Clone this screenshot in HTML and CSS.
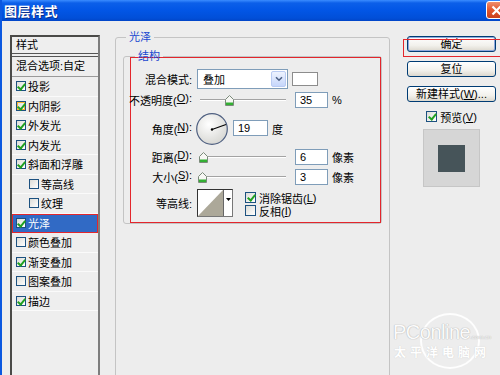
FILE: index.html
```html
<!DOCTYPE html>
<html lang="zh-CN">
<head>
    <meta charset="UTF-8">
    <title>图层样式</title>
    <link rel="stylesheet" href="styles.css">
</head>
<body>
    <div class="window">
        <div class="titlebar">
            <span class="title">图层样式</span>
            <span class="close">
                <svg width="11" height="11" viewBox="0 0 11 11"><path d="M1.5 1.5 L9.5 9.5 M9.5 1.5 L1.5 9.5" stroke="#fff" stroke-width="2.2"/></svg>
            </span>
        </div>

        <div class="body">
            <!-- style list -->
            <div class="styles-list">
                <div class="list-head">样式</div>
                <div class="list-blend">混合选项:自定</div>
                <div class="list-item"><span class="cb on"></span>投影</div>
                <div class="list-item"><span class="cb on hot"></span>内阴影</div>
                <div class="list-item"><span class="cb on"></span>外发光</div>
                <div class="list-item"><span class="cb on"></span>内发光</div>
                <div class="list-item"><span class="cb on"></span>斜面和浮雕</div>
                <div class="list-item sub"><span class="cb"></span>等高线</div>
                <div class="list-item sub"><span class="cb"></span>纹理</div>
                <div class="list-item selected"><span class="cb on"></span>光泽</div>
                <div class="list-item"><span class="cb"></span>颜色叠加</div>
                <div class="list-item"><span class="cb on"></span>渐变叠加</div>
                <div class="list-item"><span class="cb"></span>图案叠加</div>
                <div class="list-item"><span class="cb on"></span>描边</div>
            </div>

            <!-- settings -->
            <fieldset class="group outer">
                <legend>光泽</legend>
                <fieldset class="group inner">
                    <legend>结构</legend>
                    <div class="marked">
                        <div class="row row-blend">
                            <span class="lbl">混合模式:</span>
                            <div class="select">
                                <span class="select-text">叠加</span>
                                <span class="select-btn">
                                    <svg width="8" height="6" viewBox="0 0 8 6"><path d="M1 1.2 L4 4.2 L7 1.2" fill="none" stroke="#4d6185" stroke-width="1.6"/></svg>
                                </span>
                            </div>
                            <span class="swatch"></span>
                        </div>

                        <div class="row row-opacity">
                            <span class="lbl">不透明度(<u>O</u>):</span>
                            <div class="slider">
                                <div class="track"></div>
                                <span class="thumb" style="left: 30%"><svg width="9" height="11" viewBox="0 0 9 11"><path d="M0.5 4.5 L4.5 0.5 L8.5 4.5 V10.5 H0.5 Z" fill="#f7f7f4" stroke="#7a8a7a"/><rect x="1" y="7.5" width="7" height="2.5" fill="#33b033"/></svg></span>
                            </div>
                            <span class="field">35</span>
                            <span class="unit">%</span>
                        </div>

                        <div class="row row-angle">
                            <span class="lbl">角度(<u>N</u>):</span>
                            <svg class="dial" width="32" height="32" viewBox="0 0 32 32">
                                <defs>
                                    <radialGradient id="dialFill" cx="40%" cy="35%" r="70%">
                                        <stop offset="0" stop-color="#ffffff"/>
                                        <stop offset="1" stop-color="#d6d6d2"/>
                                    </radialGradient>
                                </defs>
                                <circle cx="16" cy="16" r="15.3" fill="url(#dialFill)" stroke="#4e5f80" stroke-width="1.2"/>
                                <line x1="16" y1="16.5" x2="30" y2="11.4" stroke="#000" stroke-width="1.1"/>
                                <circle cx="16" cy="16.5" r="1.2" fill="#000"/>
                            </svg>
                            <span class="field wide">19</span>
                            <span class="unit">度</span>
                        </div>

                        <div class="row row-slider">
                            <span class="lbl">距离(<u>D</u>):</span>
                            <div class="slider">
                                <div class="track"></div>
                                <span class="thumb" style="left: 2%"><svg width="9" height="11" viewBox="0 0 9 11"><path d="M0.5 4.5 L4.5 0.5 L8.5 4.5 V10.5 H0.5 Z" fill="#f7f7f4" stroke="#7a8a7a"/><rect x="1" y="7.5" width="7" height="2.5" fill="#33b033"/></svg></span>
                            </div>
                            <span class="field">6</span>
                            <span class="unit">像素</span>
                        </div>

                        <div class="row row-slider">
                            <span class="lbl">大小(<u>S</u>):</span>
                            <div class="slider">
                                <div class="track"></div>
                                <span class="thumb" style="left: 1%"><svg width="9" height="11" viewBox="0 0 9 11"><path d="M0.5 4.5 L4.5 0.5 L8.5 4.5 V10.5 H0.5 Z" fill="#f7f7f4" stroke="#7a8a7a"/><rect x="1" y="7.5" width="7" height="2.5" fill="#33b033"/></svg></span>
                            </div>
                            <span class="field">3</span>
                            <span class="unit">像素</span>
                        </div>

                        <div class="row row-contour">
                            <span class="lbl">等高线:</span>
                            <div class="contour">
                                <svg width="25" height="26" viewBox="0 0 25 26"><rect width="25" height="26" fill="#fff"/><polygon points="0,26 25,0 25,26" fill="#aca899"/></svg>
                                <span class="contour-btn"><svg width="5" height="3" viewBox="0 0 5 3"><path d="M0 0 H5 L2.5 3 Z" fill="#000"/></svg></span>
                            </div>
                            <div class="checks">
                                <label class="check"><span class="cb big on"></span>消除锯齿(<u>L</u>)</label>
                                <label class="check"><span class="cb big"></span>反相(<u>I</u>)</label>
                            </div>
                        </div>
                    </div>
                </fieldset>
            </fieldset>

            <!-- buttons -->
            <div class="side">
                <span class="btn default">确定</span>
                <span class="btn">复位</span>
                <span class="btn">新建样式(<u>W</u>)...</span>
                <label class="check preview-check"><span class="cb big on"></span>预览(<u>V</u>)</label>
                <div class="preview"><span class="preview-swatch"></span></div>
                <span class="mark-ok"></span>
            </div>
        </div>

        <div class="watermark">
            <span class="wm-ring"></span>
            <span class="wm-logo">PConline<small>.com.cn</small></span>
            <span class="wm-sub">太平洋电脑网</span>
        </div>
    </div>
</body>
</html>
```

FILE: styles.css
```css
* {
    box-sizing: border-box;
}
body {
    margin: 0;
    width: 500px;
    height: 375px;
    overflow: hidden;
    font-family: "Liberation Sans", "Noto Sans CJK SC", sans-serif;
    font-size: 11px;
    color: #000;
    background: #ededed;
}
u {
    text-decoration: underline;
}
.window {
    position: relative;
    height: 375px;
    overflow: hidden;
    border-left: 2px solid #0b58e0;
    background: #ededed;
}
.titlebar {
    height: 21px;
    display: flex;
    align-items: center;
    justify-content: space-between;
    padding-left: 2px;
    background: linear-gradient(#3a8cff 0, #0c5fe9 3px, #0256e6 10px, #014fd8 18px, #0145c8 21px);
}
.title {
    color: #fff;
    font-weight: bold;
    font-size: 13px;
    letter-spacing: 0.5px;
    text-shadow: 1px 1px 0 #0a2e8a;
}
.close {
    width: 21px;
    height: 18px;
    margin-right: -7px;
    margin-top: -1px;
    display: flex;
    align-items: center;
    justify-content: center;
    border: 1px solid #fff;
    border-radius: 3px;
    background: linear-gradient(#f08e6c, #e2562e 50%, #c8401c);
}
.body {
    display: flex;
    align-items: flex-start;
    padding-top: 14px;
}

/* style list */
.styles-list {
    margin-left: 8px;
    width: 90px;
    height: 345px;
    flex: none;
    border: 2px solid #4a4a48;
    border-right-color: #7d7d7d;
    border-bottom: none;
    background: #eeeeee;
}
.list-head {
    height: 20px;
    line-height: 16px;
    padding-left: 4px;
    border-bottom: 4px double #555;
}
.list-blend {
    height: 20px;
    line-height: 19px;
    padding-left: 4px;
    border-bottom: 1px solid #9a9a9a;
}
.list-item {
    height: 19.5px;
    display: flex;
    align-items: center;
    padding-left: 4px;
    border-bottom: 1px solid #fafafa;
}
.list-item.sub {
    padding-left: 17px;
}
.list-item.selected {
    background: #316ac5;
    color: #fff;
    outline: 1px solid #e3262c;
    outline-offset: -1px;
}
.cb {
    position: relative;
    width: 10px;
    height: 10px;
    margin-right: 2px;
    flex: none;
    border: 1px solid #1c5180;
    background: linear-gradient(135deg, #dcdcd7, #fff);
}
.cb.big {
    width: 11px;
    height: 11px;
    margin-right: 3px;
}
.cb.hot {
    box-shadow: inset 0 0 0 1px #f8b636;
}
.cb.on::after {
    content: "";
    position: absolute;
    left: 2px;
    top: 0px;
    width: 3px;
    height: 6px;
    border-right: 2px solid #21a121;
    border-bottom: 2px solid #21a121;
    transform: rotate(40deg);
}
.cb.big.on::after {
    left: 3px;
    top: 0px;
}

/* group boxes */
.group {
    margin: 0;
    padding: 0;
    min-width: 0;
    border: 1px solid #c4c4c4;
    border-radius: 3px;
}
.group legend {
    margin-left: 10px;
    padding: 0 3px;
    line-height: 14px;
    color: #1a48d0;
}
.outer {
    margin: -5px 0 0 15px;
    width: 275px;
    height: 360px;
    flex: none;
}
.inner {
    margin: 5px 0 0 7px;
    width: 259px;
}
.inner legend {
    margin-left: 11px;
}
.marked {
    margin: -6px 0 0 6px;
    padding: 11px 0 5px;
    border: 1px solid #e3262c;
}
.row {
    display: flex;
    align-items: center;
}
.lbl {
    width: 66px;
    flex: none;
    display: flex;
    justify-content: flex-end;
    padding-right: 5px;
    white-space: nowrap;
}
.row-blend {
    height: 20px;
}
.row-opacity {
    height: 16px;
    margin-top: 3px;
}
.row-angle {
    height: 32px;
    margin-top: 5px;
}
.row-slider {
    height: 16px;
    margin-top: 4px;
}
.row-contour {
    height: 28px;
    margin-top: 4px;
    align-items: flex-start;
}
.row-contour .lbl {
    height: 28px;
    align-items: center;
}
.select {
    width: 91px;
    height: 20px;
    display: flex;
    align-items: center;
    justify-content: space-between;
    border: 1px solid #7f9db9;
    background: #fff;
    padding: 1px;
}
.select-text {
    padding-left: 4px;
}
.select-btn {
    width: 15px;
    height: 16px;
    display: flex;
    align-items: center;
    justify-content: center;
    border: 1px solid #b9cbf3;
    border-radius: 2px;
    background: linear-gradient(#eef3fe, #c6d6fb);
}
.swatch {
    width: 26px;
    height: 14px;
    margin-left: 4px;
    border: 1px solid #8c8c8c;
    background: #fff;
}
.slider {
    position: relative;
    width: 93px;
    height: 16px;
    flex: none;
}
.track {
    margin: 7px 4px 0 3px;
    height: 2px;
    border-top: 1px solid #a3a3a3;
    border-bottom: 1px solid #fff;
}
.thumb {
    position: absolute;
    top: 3px;
    width: 9px;
    height: 11px;
    display: block;
}
.thumb svg {
    display: block;
}
.field {
    width: 33px;
    height: 16px;
    margin-left: 5px;
    padding-left: 4px;
    line-height: 14px;
    flex: none;
    border: 1px solid #7f9db9;
    background: #fff;
}
.field.wide {
    width: 35px;
}
.unit {
    margin-left: 4px;
}
.dial {
    display: block;
    margin-left: -1px;
}
.row-angle .field {
    margin-top: -2px;
}
.contour {
    display: flex;
    width: 36px;
    height: 28px;
    border: 1px solid #333;
    border-right-color: #777;
    border-bottom-color: #777;
    background: #fff;
}
.contour svg {
    display: block;
}
.contour-btn {
    width: 9px;
    display: flex;
    justify-content: center;
    padding-top: 8px;
    border-left: 1px solid #666;
}
.checks {
    margin-left: 12px;
    display: flex;
    flex-direction: column;
    padding-top: 2px;
}
.check {
    display: flex;
    align-items: center;
    height: 13px;
}

/* right side */
.side {
    position: relative;
    margin: 1px 0 0 17px;
    width: 89px;
    flex: none;
    display: flex;
    flex-direction: column;
    align-items: center;
}
.btn {
    width: 89px;
    height: 16px;
    margin-bottom: 9px;
    line-height: 14px;
    text-align: center;
    border: 1px solid #003c74;
    border-radius: 3px;
    background: linear-gradient(#ffffff, #f2f1ec 60%, #dcd8ce);
}
.btn.default {
    box-shadow: inset 0 0 0 1px #8fa9de;
}
.preview-check {
    margin-top: -1px;
}
.preview {
    margin-top: 6px;
    width: 57px;
    height: 58px;
    display: flex;
    align-items: center;
    justify-content: center;
    border: 1px solid #c6c6c6;
    background: #d6d6d6;
}
.preview-swatch {
    width: 27px;
    height: 27px;
    background: #465459;
}
.mark-ok {
    position: absolute;
    left: -4px;
    top: 3px;
    width: 100px;
    height: 18px;
    border: 1px solid #e3262c;
}

/* watermark */
.watermark {
    position: absolute;
    left: 390px;
    top: 312px;
    width: 110px;
    height: 60px;
    color: #fbfbfb;
}
.wm-ring {
    position: absolute;
    left: 28px;
    top: 1px;
    width: 60px;
    height: 56px;
    border: 2px solid rgba(255, 255, 255, 0.9);
    border-radius: 50%;
}
.wm-logo {
    position: absolute;
    left: 1px;
    top: 9px;
    font-size: 20px;
    letter-spacing: -0.5px;
    text-shadow: 0 0 1px #b4b4b4, 0 0 1px #b4b4b4;
}
.wm-logo small {
    font-size: 6px;
    letter-spacing: 0;
}
.wm-sub {
    position: absolute;
    left: 2px;
    top: 31px;
    font-size: 12px;
    font-weight: bold;
    letter-spacing: 4px;
    color: #ffffff;
    text-shadow: 0 0 1px #c4c4c4;
}
```
